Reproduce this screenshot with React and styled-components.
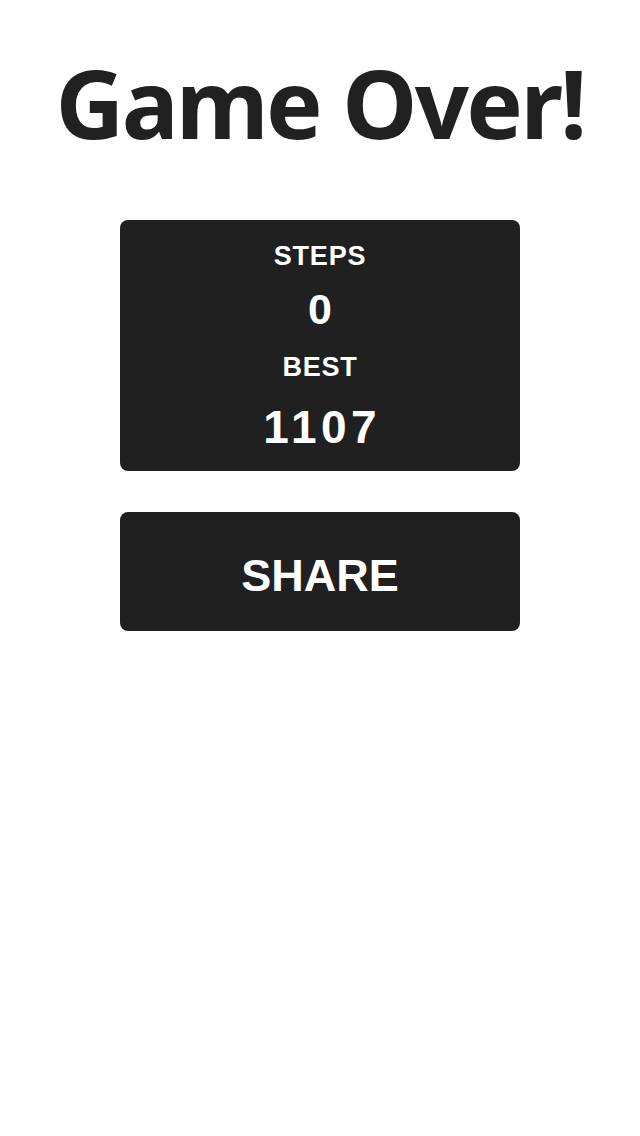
import React from "react";
import styled, { createGlobalStyle } from "styled-components";

const Global = createGlobalStyle`
  html, body { margin: 0; padding: 0; background: #ffffff; }
  body { font-family: "Noto Sans", "Open Sans", sans-serif; }
`;

const Page = styled.div`
  display: flex;
  flex-direction: column;
  align-items: center;
  padding-top: 47px;
`;

const Title = styled.h1`
  margin: 0;
  font-family: "Noto Sans", sans-serif;
  font-weight: 700;
  font-size: 95px;
  line-height: 110px;
  color: #212121;
  letter-spacing: -2.6px;
`;

const Card = styled.div`
  margin-top: ${(p) => p.$gap}px;
  width: 400px;
  height: ${(p) => p.$h}px;
  box-sizing: border-box;
  padding-top: ${(p) => p.$pt}px;
  background: #202020;
  border-radius: 8px;
  display: flex;
  flex-direction: column;
  align-items: center;
  justify-content: ${(p) => (p.$center ? "center" : "flex-start")};
  color: #ffffff;
`;

const Label = styled.div`
  font-family: "Liberation Sans", Arial, sans-serif;
  font-weight: 700;
  font-size: 27px;
  line-height: 27px;
  letter-spacing: 0.8px;
  margin-top: ${(p) => p.$mt}px;
`;

const Value = styled.div`
  font-family: "Liberation Sans", Arial, sans-serif;
  font-weight: 700;
  font-size: ${(p) => p.$size}px;
  line-height: ${(p) => p.$size}px;
  letter-spacing: ${(p) => p.$ls}px;
  padding-left: ${(p) => p.$ls}px;
  margin-top: ${(p) => p.$mt}px;
`;

const ShareText = styled.span`
  font-family: "Liberation Sans", Arial, sans-serif;
  font-weight: 700;
  font-size: 45px;
  line-height: 45px;
`;

export default function App() {
  return (
    <>
      <Global />
      <Page>
        <Title>Game Over!</Title>
        <Card $gap={63} $h={251} $pt={23}>
          <Label $mt={0}>STEPS</Label>
          <Value $size={43} $ls={0} $mt={18}>0</Value>
          <Label $mt={23}>BEST</Label>
          <Value $size={46} $ls={4.5} $mt={23}>1107</Value>
        </Card>
        <Card $gap={41} $h={119} $pt={7} $center>
          <ShareText>SHARE</ShareText>
        </Card>
      </Page>
    </>
  );
}
